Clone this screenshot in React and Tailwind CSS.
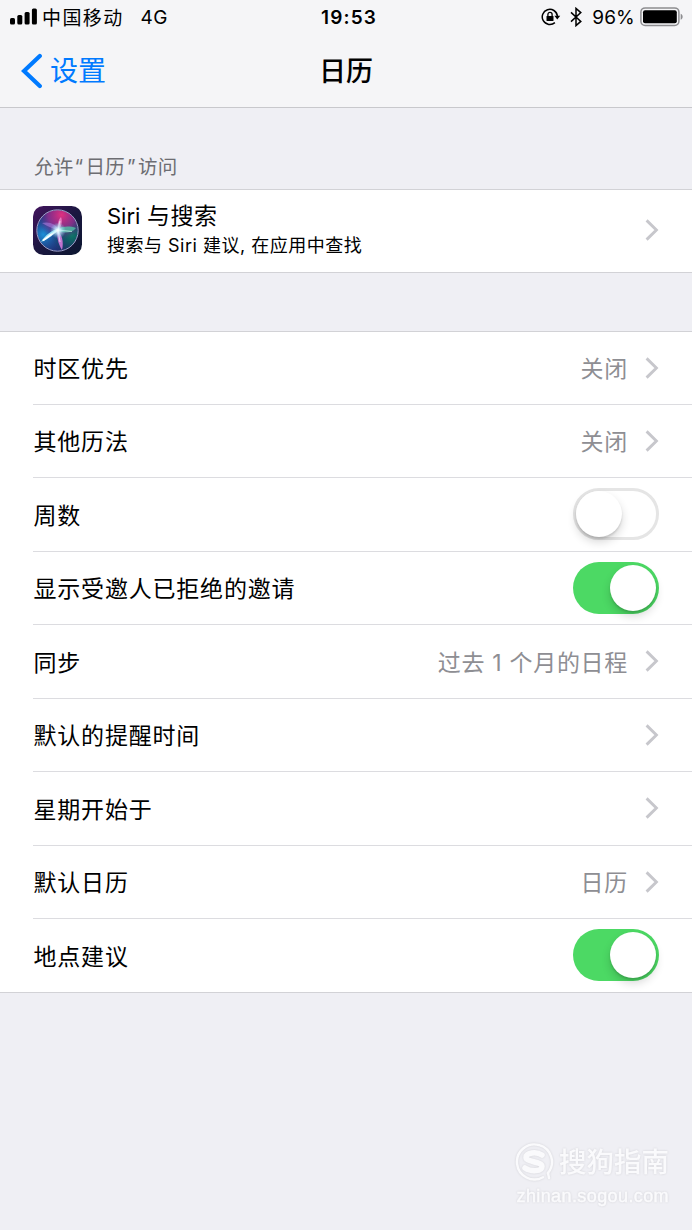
import React from 'react';

const rows = [
  { label: '时区优先', value: '关闭' },
  { label: '其他历法', value: '关闭' },
  { label: '周数', type: 'switch', on: false },
  { label: '显示受邀人已拒绝的邀请', type: 'switch', on: true },
  { label: '同步', value: '过去 1 个月的日程' },
  { label: '默认的提醒时间' },
  { label: '星期开始于' },
  { label: '默认日历', value: '日历' },
  { label: '地点建议', type: 'switch', on: true },
];

const Chevron = () => (
  <svg className="w-[14px] h-[22px] shrink-0" viewBox="0 0 14 22" fill="none" stroke="#c7c7cc" strokeWidth="2.9">
    <path d="M1.6 1.4 11.4 11 1.6 20.6" />
  </svg>
);

const Switch = ({ on }) => (
  <div
    className={`w-[86px] h-[52px] rounded-full flex items-center ${
      on ? 'bg-[#4cd964] justify-end px-[3px]' : 'bg-white border-[3px] border-[#e5e5e5]'
    }`}
  >
    <div className="w-[46px] h-[46px] rounded-full bg-white shadow-[0_5px_10px_rgba(0,0,0,0.16),0_2px_2px_rgba(0,0,0,0.12)]" />
  </div>
);

const SignalIcon = () => (
  <svg className="w-[27px] h-[17px] mb-[3px]" viewBox="0 0 27 17" fill="#000">
    <rect x="0" y="10" width="5" height="6.5" rx="1.5" />
    <rect x="7.3" y="7" width="5" height="9.5" rx="1.5" />
    <rect x="14.6" y="4" width="5" height="12.5" rx="1.5" />
    <rect x="21.9" y="0.5" width="5" height="16" rx="1.5" />
  </svg>
);

const RotationLockIcon = () => (
  <svg className="w-[20px] h-[18px] mb-[2px] mr-[9px]" viewBox="0 0 20 18" fill="none" stroke="#000">
    <path d="M13.9 14.6A7.6 7.6 0 1 1 16.4 8" strokeWidth="1.5" />
    <path d="M13.4 7.8h5.8l-2.9 3.6z" fill="#000" stroke="none" />
    <rect x="5.5" y="7.9" width="7" height="5.2" rx="0.7" fill="#000" stroke="none" />
    <path d="M6.9 8.2V6.5a2.1 2.1 0 0 1 4.2 0v1.7" strokeWidth="1.3" />
  </svg>
);

const BluetoothIcon = () => (
  <svg className="w-[12px] h-[20px] mb-[2px]" viewBox="0 0 12 20" fill="none" stroke="#000" strokeWidth="1.5">
    <path d="M1 5.4 10.8 14.4 6 18.6V1.4l4.8 4.2L1 14.6" />
  </svg>
);

const BatteryIcon = () => (
  <svg className="w-[44px] h-[20px] mb-[2px]" viewBox="0 0 44 20">
    <rect x="0.9" y="0.9" width="38" height="17.6" rx="4.2" fill="none" stroke="#8d8d90" strokeWidth="1.5" />
    <rect x="3" y="3.2" width="33.8" height="13" rx="2" fill="#000" />
    <path d="M40.7 6.7c2.6 1 2.6 5 0 6z" fill="#8d8d90" />
  </svg>
);

const SiriIcon = () => (
  <svg className="w-[49px] h-[49px] shrink-0" viewBox="0 0 49 49">
    <defs>
      <linearGradient id="siriBg" x1="0" y1="0" x2="1" y2="1">
        <stop offset="0" stopColor="#43145e" />
        <stop offset="0.5" stopColor="#1b1740" />
        <stop offset="1" stopColor="#0b1730" />
      </linearGradient>
      <radialGradient id="siriPink" cx="0.6" cy="0.12" r="0.6">
        <stop offset="0" stopColor="#e0307f" />
        <stop offset="0.55" stopColor="#a02c91" stopOpacity="0.75" />
        <stop offset="1" stopColor="#5a2c91" stopOpacity="0" />
      </radialGradient>
      <radialGradient id="siriBlue" cx="0.15" cy="0.6" r="0.6">
        <stop offset="0" stopColor="#1c90d8" />
        <stop offset="1" stopColor="#1a50a0" stopOpacity="0" />
      </radialGradient>
      <radialGradient id="siriGreen" cx="0.85" cy="0.62" r="0.5">
        <stop offset="0" stopColor="#0c7a66" />
        <stop offset="1" stopColor="#0b5d5d" stopOpacity="0" />
      </radialGradient>
      <radialGradient id="siriGlow">
        <stop offset="0" stopColor="#fff" />
        <stop offset="0.35" stopColor="#cdf6ff" stopOpacity="0.8" />
        <stop offset="1" stopColor="#72d9ef" stopOpacity="0" />
      </radialGradient>
      <filter id="siriSoft">
        <feGaussianBlur stdDeviation="0.7" />
      </filter>
    </defs>
    <rect width="49" height="49" rx="10.5" fill="url(#siriBg)" />
    <circle cx="24.5" cy="24.5" r="20.5" fill="#20286b" />
    <circle cx="24.5" cy="24.5" r="20.5" fill="url(#siriBlue)" />
    <circle cx="24.5" cy="24.5" r="20.5" fill="url(#siriGreen)" />
    <circle cx="24.5" cy="24.5" r="20.5" fill="url(#siriPink)" />
    <g filter="url(#siriSoft)">
      <path d="M9 17C16 15 23 18 26 24 20 23 14 20 9 17Z" fill="#a77fe0" opacity="0.6" />
      <path d="M28 11C30 16 28 21 25 25 24 19 25 14 28 11Z" fill="#f58fd0" opacity="0.75" />
      <path d="M25 23C30 20 37 20 43 22 38 28 31 27 25 25Z" fill="#4fc9a8" opacity="0.75" />
      <path d="M24 24C29 28 31 36 29 44 25 38 24 31 24 24Z" fill="#dd7be0" opacity="0.85" />
      <path d="M27 22C22 28 15 33 8 36 12 29 19 24 27 22Z" fill="#a9f3ff" opacity="0.9" />
      <path d="M26 23 10 34.5" stroke="#fff" strokeWidth="1.6" />
      <path d="M25 24 39 25.5M25 24 27 36M25 24 27 15" stroke="#f2feff" strokeWidth="1.2" opacity="0.6" />
    </g>
    <circle cx="25" cy="24.5" r="8" fill="url(#siriGlow)" />
    <circle cx="24.5" cy="24.5" r="20.7" fill="none" stroke="#9d9fc8" strokeWidth="1" />
  </svg>
);

const StatusBar = () => (
  <div className="h-[36px] pl-[10px] pr-[8px] flex items-center justify-between text-[19px] leading-[36px]">
    <div className="w-[270px] flex items-center">
      <SignalIcon />
      <span className="ml-[5px] tracking-[1.4px] pt-[1px]">中国移动</span>
      <span className="ml-[17px] tracking-[0.4px]">4G</span>
    </div>
    <div className="pl-[4px] font-semibold tracking-[1.1px]">19:53</div>
    <div className="w-[270px] flex items-center justify-end">
      <RotationLockIcon />
      <BluetoothIcon />
      <span className="ml-[10px] mr-[5px] tracking-[0.2px]">96%</span>
      <BatteryIcon />
    </div>
  </div>
);

const NavBar = () => (
  <div className="h-[71px] pb-[2px] px-[21px] grid grid-cols-3 items-center">
    <div className="flex items-center text-[#007aff]">
      <svg className="w-[22px] h-[36px]" viewBox="0 0 22 36" fill="none" stroke="#007aff" strokeWidth="4.2" strokeLinecap="round">
        <path d="M18.8 3 3 18l15.8 15" />
      </svg>
      <span className="pt-[1px] ml-[7px] text-[28px] leading-[69px]">设置</span>
    </div>
    <h1 className="pt-[1px] text-center text-[27px] leading-[69px] font-medium">日历</h1>
  </div>
);

const Row = ({ label, value, type, on, first, last }) => (
  <li className="pl-[33px]">
    <div
      className={`pr-[33px] flex items-center justify-between ${first || last ? 'h-[72.5px]' : 'h-[73.5px]'} ${
        last ? '' : 'border-b border-[#dcdce0]'
      }`}
    >
      <span className="pl-[0.5px] pt-[3px] text-[23px] tracking-[0.8px]">{label}</span>
      {type === 'switch' ? (
        <Switch on={on} />
      ) : (
        <div className="flex items-center text-[#8e8e93] text-[23px] tracking-[0.7px]">
          {value && <span className="pt-[3px] mr-[17px]">{value}</span>}
          <Chevron />
        </div>
      )}
    </div>
  </li>
);

const Watermark = () => (
  <div className="mt-[147px] pr-[23px] flex flex-col items-end text-[#fafafc]">
    <div className="flex items-center h-[44px] drop-shadow-[0_0_1px_rgba(0,0,0,0.12)]">
      <svg className="w-[40px] h-[40px]" viewBox="0 0 40 40" fill="none" stroke="#fafafc" strokeLinecap="round">
        <path d="M34 31A17.5 17.5 0 1 0 29 35.2" strokeWidth="2.4" />
        <path d="M28 13C22 9 12 11 12 15.5S28 19.5 28 24.5 17 30 11 26" strokeWidth="5.5" />
        <path d="m34 31 1 5" strokeWidth="2.4" />
      </svg>
      <span className="ml-[5px] text-[27.5px] leading-[44px] font-medium">搜狗指南</span>
    </div>
    <div className="text-[18px] leading-[24px] font-['Liberation_Sans'] tracking-[0.4px] [-webkit-text-stroke:0.4px_#fafafc] drop-shadow-[0_0_1px_rgba(0,0,0,0.12)]">
      zhinan.sogou.com
    </div>
  </div>
);

const App = () => {
  return (
    <div className="w-[692px] h-[1230px] overflow-hidden bg-[#efeff4] text-black font-['Inter','Noto_Sans_CJK_SC',sans-serif]">
      <header className="h-[108px] bg-[#f5f5f7] border-b border-[#c8c8cc]">
        <StatusBar />
        <NavBar />
      </header>

      <section>
        <h2 className="h-[81px] pl-[34px] pt-[45px] text-[19.5px] leading-[28px] tracking-[0.3px] text-[#6d6d72]">
          允许<span className="ml-[1px] mr-[2px]">“</span>日历<span className="ml-[2px] mr-[2px]">”</span>访问
        </h2>
        <div className="h-[84px] pb-[2px] px-[33px] flex items-center bg-white border-y border-[#d2d2d6]">
          <SiriIcon />
          <div className="ml-[25px] pt-[1px] flex-1">
            <div className="text-[22px] leading-[29px]">
              Siri <span className="ml-[0.5px] text-[23px] tracking-[0.5px]">与搜索</span>
            </div>
            <div className="text-[18px] leading-[29px] tracking-[0.5px]">搜索与 Siri 建议, 在应用中查找</div>
          </div>
          <Chevron />
        </div>
      </section>

      <ul className="mt-[58px] bg-white border-y border-[#d2d2d6]">
        {rows.map((row, i) => (
          <Row key={row.label} {...row} first={i === 0} last={i === rows.length - 1} />
        ))}
      </ul>

      <Watermark />
    </div>
  );
};

export default App;
